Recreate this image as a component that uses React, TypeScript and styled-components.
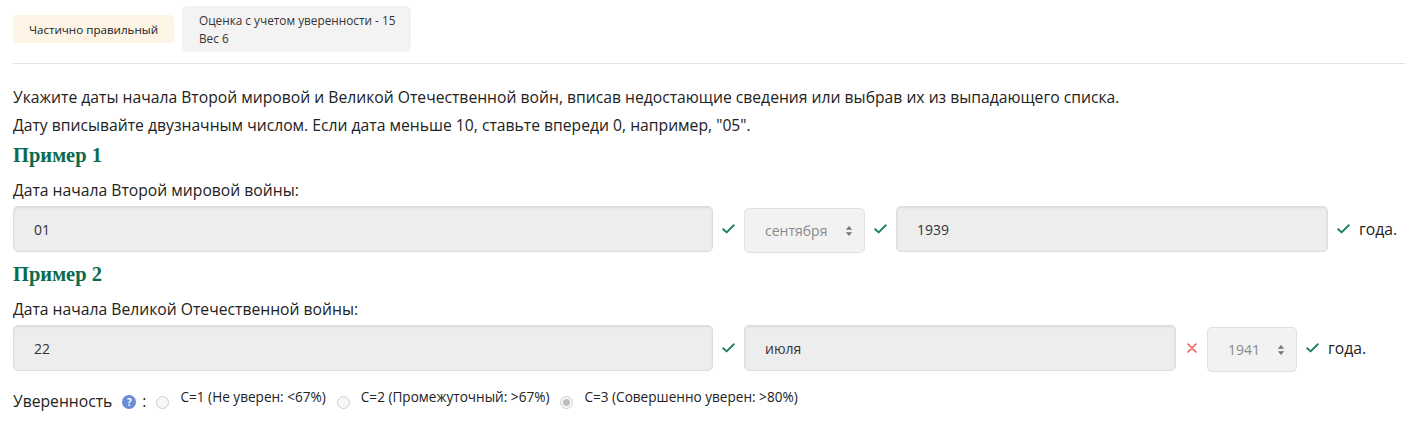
import React from "react";
import styled, { createGlobalStyle } from "styled-components";

const Global = createGlobalStyle`
  html, body { margin: 0; padding: 0; background: #fff; }
  body { font-family: "Open Sans", "Noto Sans", sans-serif; color: #2b2b2b; }
  * { box-sizing: border-box; }
`;

const Page = styled.div`
  padding: 6px 0 0 13px;
  width: 1405px;
`;

const Header = styled.div`
  display: flex;
  align-items: center;
  gap: 8px;
`;

const StatusBadge = styled.div`
  height: 28px;
  width: 161px;
  border-radius: 4px;
  background: #fdf4e6;
  font-size: 11.6px;
  color: #222;
  display: flex;
  align-items: center;
  justify-content: center;
  white-space: nowrap;
`;

const ScoreBadge = styled.div`
  height: 46px;
  width: 229px;
  border-radius: 5px;
  background: #f3f3f3;
  font-size: 11.8px;
  color: #333;
  padding: 5px 17px;
  line-height: 18px;
  white-space: nowrap;
`;

const Divider = styled.hr`
  border: none;
  border-top: 1px solid #e2e2e2;
  margin: 11px 0 0 0;
`;

const Paragraph = styled.p`
  margin: 0;
  font-size: 15.7px;
  line-height: 28px;
  color: #222;
`;

const Intro = styled.div`
  margin-top: 19px;
`;

const Heading = styled.h3<{ $top: number }>`
  margin: ${(p) => p.$top}px 0 11px 0;
  font-family: "Liberation Serif", "DejaVu Serif", serif;
  font-weight: 700;
  font-size: 20.5px;
  line-height: 24px;
  color: #0c6b4c;
`;

const Label = styled.div`
  font-size: 15.7px;
  line-height: 24px;
  margin-bottom: 4px;
  color: #222;
`;

const Row = styled.div`
  display: flex;
  align-items: flex-start;
  height: 47px;
`;

const TextField = styled.div<{ $w: number }>`
  width: ${(p) => p.$w}px;
  height: 46px;
  background: #ededed;
  border: 1px solid #dcdcdc;
  border-radius: 5px;
  box-shadow: inset 0 1px 2px rgba(0, 0, 0, 0.08);
  padding-left: 20px;
  display: flex;
  align-items: center;
  font-size: 14px;
  color: #333;
`;

const SelectField = styled.div<{ $w: number }>`
  width: ${(p) => p.$w}px;
  height: 45px;
  margin-top: 2px;
  background: #f2f2f2;
  border: 1px solid #e0e0e0;
  border-radius: 5px;
  padding: 0 11px 0 20px;
  display: flex;
  align-items: center;
  justify-content: space-between;
  font-size: 14px;
  color: #8a8a8a;
`;

const Mark = styled.span`
  width: 31px;
  height: 46px;
  display: flex;
  align-items: center;
  justify-content: center;
`;

const Suffix = styled.span`
  font-size: 15.7px;
  line-height: 46px;
  color: #222;
`;

const Confidence = styled.div`
  display: flex;
  align-items: center;
  margin-top: 18px;
  font-size: 15.7px;
  color: #222;
`;

const Help = styled.span`
  width: 14px;
  height: 14px;
  border-radius: 50%;
  background: #6a8bd6;
  color: #fff;
  font-size: 10px;
  font-weight: 700;
  display: inline-flex;
  align-items: center;
  justify-content: center;
  margin: 2px 0 0 10px;
`;

const Colon = styled.span`
  margin: 0 10px 0 6px;
`;

const Radio = styled.span<{ $checked?: boolean }>`
  width: 13px;
  height: 13px;
  border-radius: 50%;
  border: 1px solid #cfcfcf;
  background: #f7f7f7;
  margin-top: 3px;
  display: inline-flex;
  align-items: center;
  justify-content: center;
  flex: none;
  &::after {
    content: "";
    display: ${(p) => (p.$checked ? "block" : "none")};
    width: 7px;
    height: 7px;
    border-radius: 50%;
    background: #bdbdbd;
  }
`;

const RadioLabel = styled.span`
  font-size: 13.6px;
  color: #222;
  margin: -10px 11px 0 11px;
`;

const Check = () => (
  <svg width="13" height="10" viewBox="0 0 13 10">
    <path d="M1.2 5.2 L4.6 8.4 L11.8 1.3" fill="none" stroke="#1f7f5c" strokeWidth="1.9" strokeLinecap="round" strokeLinejoin="round" />
  </svg>
);

const Cross = () => (
  <svg width="10" height="10" viewBox="0 0 10 10">
    <path d="M1 1 L9 9 M9 1 L1 9" stroke="#ef5b5b" strokeWidth="1.6" strokeLinecap="round" />
  </svg>
);

const Arrows = () => (
  <svg width="8" height="12" viewBox="0 0 8 12">
    <path d="M4 1 L7.2 4.8 H0.8 Z M4 11 L7.2 7.2 H0.8 Z" fill="#777" />
  </svg>
);

export default function App() {
  return (
    <>
      <Global />
      <Page>
        <Header>
          <StatusBadge>Частично правильный</StatusBadge>
          <ScoreBadge>
            Оценка с учетом уверенности - 15
            <br />
            Вес 6
          </ScoreBadge>
        </Header>
        <Divider />
        <Intro>
          <Paragraph>
            Укажите даты начала Второй мировой и Великой Отечественной войн, вписав недостающие сведения или выбрав их из выпадающего списка.
          </Paragraph>
          <Paragraph>
            Дату вписывайте двузначным числом. Если дата меньше 10, ставьте впереди 0, например, "05".
          </Paragraph>
        </Intro>
        <Heading $top={4}>Пример 1</Heading>
        <Label>Дата начала Второй мировой войны:</Label>
        <Row>
          <TextField $w={700}>01</TextField>
          <Mark><Check /></Mark>
          <SelectField $w={121}>
            сентября
            <Arrows />
          </SelectField>
          <Mark><Check /></Mark>
          <TextField $w={432}>1939</TextField>
          <Mark><Check /></Mark>
          <Suffix>года.</Suffix>
        </Row>
        <Heading $top={9}>Пример 2</Heading>
        <Label>Дата начала Великой Отечественной войны:</Label>
        <Row>
          <TextField $w={700}>22</TextField>
          <Mark><Check /></Mark>
          <TextField $w={432}>июля</TextField>
          <Mark><Cross /></Mark>
          <SelectField $w={90}>
            1941
            <Arrows />
          </SelectField>
          <Mark><Check /></Mark>
          <Suffix>года.</Suffix>
        </Row>
        <Confidence>
          Уверенность
          <Help>?</Help>
          <Colon>:</Colon>
          <Radio />
          <RadioLabel>C=1 (Не уверен: &lt;67%)</RadioLabel>
          <Radio />
          <RadioLabel>C=2 (Промежуточный: &gt;67%)</RadioLabel>
          <Radio $checked />
          <RadioLabel>C=3 (Совершенно уверен: &gt;80%)</RadioLabel>
        </Confidence>
      </Page>
    </>
  );
}
